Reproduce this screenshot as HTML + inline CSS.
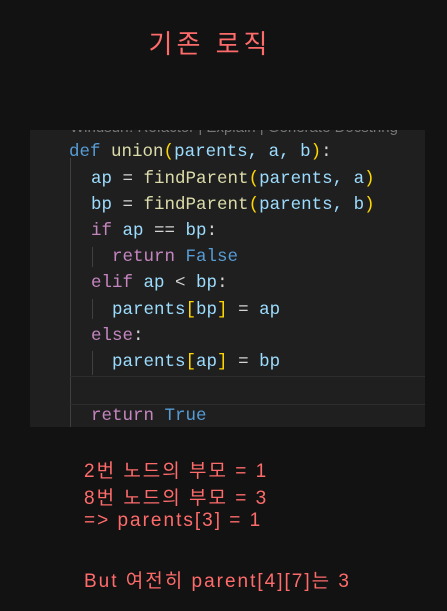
<!DOCTYPE html><html><head><style>
body{margin:0;width:447px;height:611px;background:#121212;position:relative;overflow:hidden;font-family:"Liberation Sans","Noto Sans CJK KR",sans-serif}
.t{position:absolute;left:0;width:420px;text-align:center;top:24px;color:#ff6b6b;font-size:26px;letter-spacing:4px}
.code{position:absolute;left:30px;top:130px;width:395px;height:297px;background:#1f1f1f;font-family:"Liberation Mono","DejaVu Sans Mono",monospace;font-size:17.5px;overflow:hidden}
.l{position:absolute;white-space:pre;color:#9cdcfe;height:20px;line-height:20px}
.k{color:#c586c0}.d{color:#569cd6}.f{color:#dcdcaa}.b{color:#ffd700}.c{color:#d4d4d4}
.g{position:absolute;width:1px;background:#404040}
.n{position:absolute;color:#ff6b6b;font-size:19px;left:84px;white-space:pre;letter-spacing:2px}
</style></head><body>
<div class="t">기존 로직</div>
<div class="code">
<div class="l" style="left:40px;top:-12px;color:#777;font-family:'Liberation Sans',sans-serif;font-size:15px">Windsurf: Refactor | Explain | Generate Docstring</div>
<div class="g" style="left:40px;top:28px;height:269px"></div>
<div class="g" style="left:62px;top:117px;height:20px"></div>
<div class="g" style="left:62px;top:169px;height:20px"></div>
<div class="g" style="left:62px;top:221px;height:24px"></div>
<div style="position:absolute;left:40px;right:0;top:246px;height:27px;border-top:1px solid #2d2d2d;border-bottom:1px solid #2d2d2d"></div>
<div class="l" style="left:39px;top:12px"><span class="d">def</span> <span class="f">union</span><span class="b">(</span>parents, a, b<span class="b">)</span><span class="c">:</span></div>
<div class="l" style="left:61px;top:39px">ap <span class="c">=</span> <span class="f">findParent</span><span class="b">(</span>parents, a<span class="b">)</span></div>
<div class="l" style="left:61px;top:65px">bp <span class="c">=</span> <span class="f">findParent</span><span class="b">(</span>parents, b<span class="b">)</span></div>
<div class="l" style="left:61px;top:91px"><span class="k">if</span> ap <span class="c">==</span> bp<span class="c">:</span></div>
<div class="l" style="left:82px;top:117px"><span class="k">return</span> <span class="d">False</span></div>
<div class="l" style="left:61px;top:143px"><span class="k">elif</span> ap <span class="c">&lt;</span> bp<span class="c">:</span></div>
<div class="l" style="left:82px;top:170px">parents<span class="b">[</span>bp<span class="b">]</span> <span class="c">=</span> ap</div>
<div class="l" style="left:61px;top:196px"><span class="k">else</span><span class="c">:</span></div>
<div class="l" style="left:82px;top:222px">parents<span class="b">[</span>ap<span class="b">]</span> <span class="c">=</span> bp</div>
<div class="l" style="left:61px;top:276px"><span class="k">return</span> <span class="d">True</span></div>
</div>
<div class="n" style="top:456px">2번 노드의 부모 = 1</div>
<div class="n" style="top:483px">8번 노드의 부모 = 3</div>
<div class="n" style="top:510px">=&gt; parents[3] = 1</div>
<div class="n" style="top:566px">But 여전히 parent[4][7]는 3</div>
</body></html>
